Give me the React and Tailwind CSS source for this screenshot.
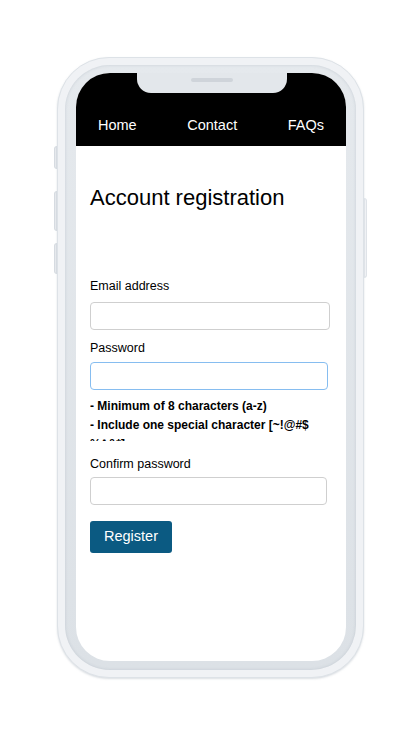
export default function App() {
  const font = { fontFamily: '"Liberation Sans", Arial, sans-serif' }

  return (
    <div className="w-[419px] h-[733px] bg-white overflow-hidden pt-[57px] pl-[57px]" style={font}>
      {/* phone frame */}
      <div className="relative w-[307px] h-[621px] rounded-[52px] border border-[#dde2e7] bg-[#f0f2f5] p-[7px] shadow-[0_1px_2px_rgba(150,160,172,0.35)]">
        {/* side buttons */}
        <div className="absolute -left-[4px] top-[88px] w-[3px] h-[23px] rounded-l bg-[#e6e9ed] border border-[#d6dbe1]" />
        <div className="absolute -left-[4px] top-[133px] w-[3px] h-[40px] rounded-l bg-[#e6e9ed] border border-[#d6dbe1]" />
        <div className="absolute -left-[4px] top-[185px] w-[3px] h-[31px] rounded-l bg-[#e6e9ed] border border-[#d6dbe1]" />
        <div className="absolute -right-[4px] top-[140px] w-[3px] h-[80px] rounded-r bg-[#f0f2f5] border border-[#dfe3e8]" />

        {/* bezel */}
        <div className="w-full h-full rounded-[45px] bg-gradient-to-b from-[#e5e9ed] to-[#dce1e6] pt-[8px] pl-[11px] shadow-[inset_0_0_3px_rgba(160,170,182,0.45)]">
          {/* screen */}
          <div className="relative w-[270px] h-[588px] rounded-[34px] overflow-hidden bg-white">
            {/* notch */}
            <div className="absolute left-[61px] top-0 w-[150px] h-[20px] rounded-b-[14px] bg-[#e3e7eb] z-10 flex justify-center pt-[5px]">
              <div className="w-[42px] h-[4px] rounded-full bg-[#cfd4da]" />
            </div>

            {/* nav */}
            <nav className="h-[73px] bg-black flex items-end justify-between px-[22px] pb-[12px] text-white text-[14.5px] leading-[17px]">
              <span>Home</span>
              <span>Contact</span>
              <span>FAQs</span>
            </nav>

            {/* form */}
            <div className="flex flex-col items-start px-[14px] text-black">
              <h1 className="mt-[39px] text-[22px] leading-[26px]">Account registration</h1>

              <label className="mt-[68px] text-[12.5px] leading-[15px]">Email address</label>
              <div className="mt-[8px] w-[240px] h-[28px] rounded-[4px] border border-[#cfcfcf]" />

              <label className="mt-[11px] text-[12.5px] leading-[15px]">Password</label>
              <div className="mt-[6px] w-[238px] h-[28px] rounded-[4px] border border-[#86bdf0]" />

              <div className="mt-[7px] h-[44px] overflow-hidden text-[12px] leading-[19px] font-bold">
                <div>- Minimum of 8 characters (a-z)</div>
                <div>- Include one special character [~!@#$</div>
                <div>%^&amp;*]</div>
              </div>

              <label className="mt-[16px] text-[12.5px] leading-[15px]">Confirm password</label>
              <div className="mt-[5px] w-[237px] h-[28px] rounded-[4px] border border-[#cfcfcf]" />

              <button className="mt-[16px] w-[82px] h-[32px] rounded-[3px] bg-[#0b5a82] text-white text-[14.5px]">
                Register
              </button>
            </div>
          </div>
        </div>
      </div>
    </div>
  )
}
